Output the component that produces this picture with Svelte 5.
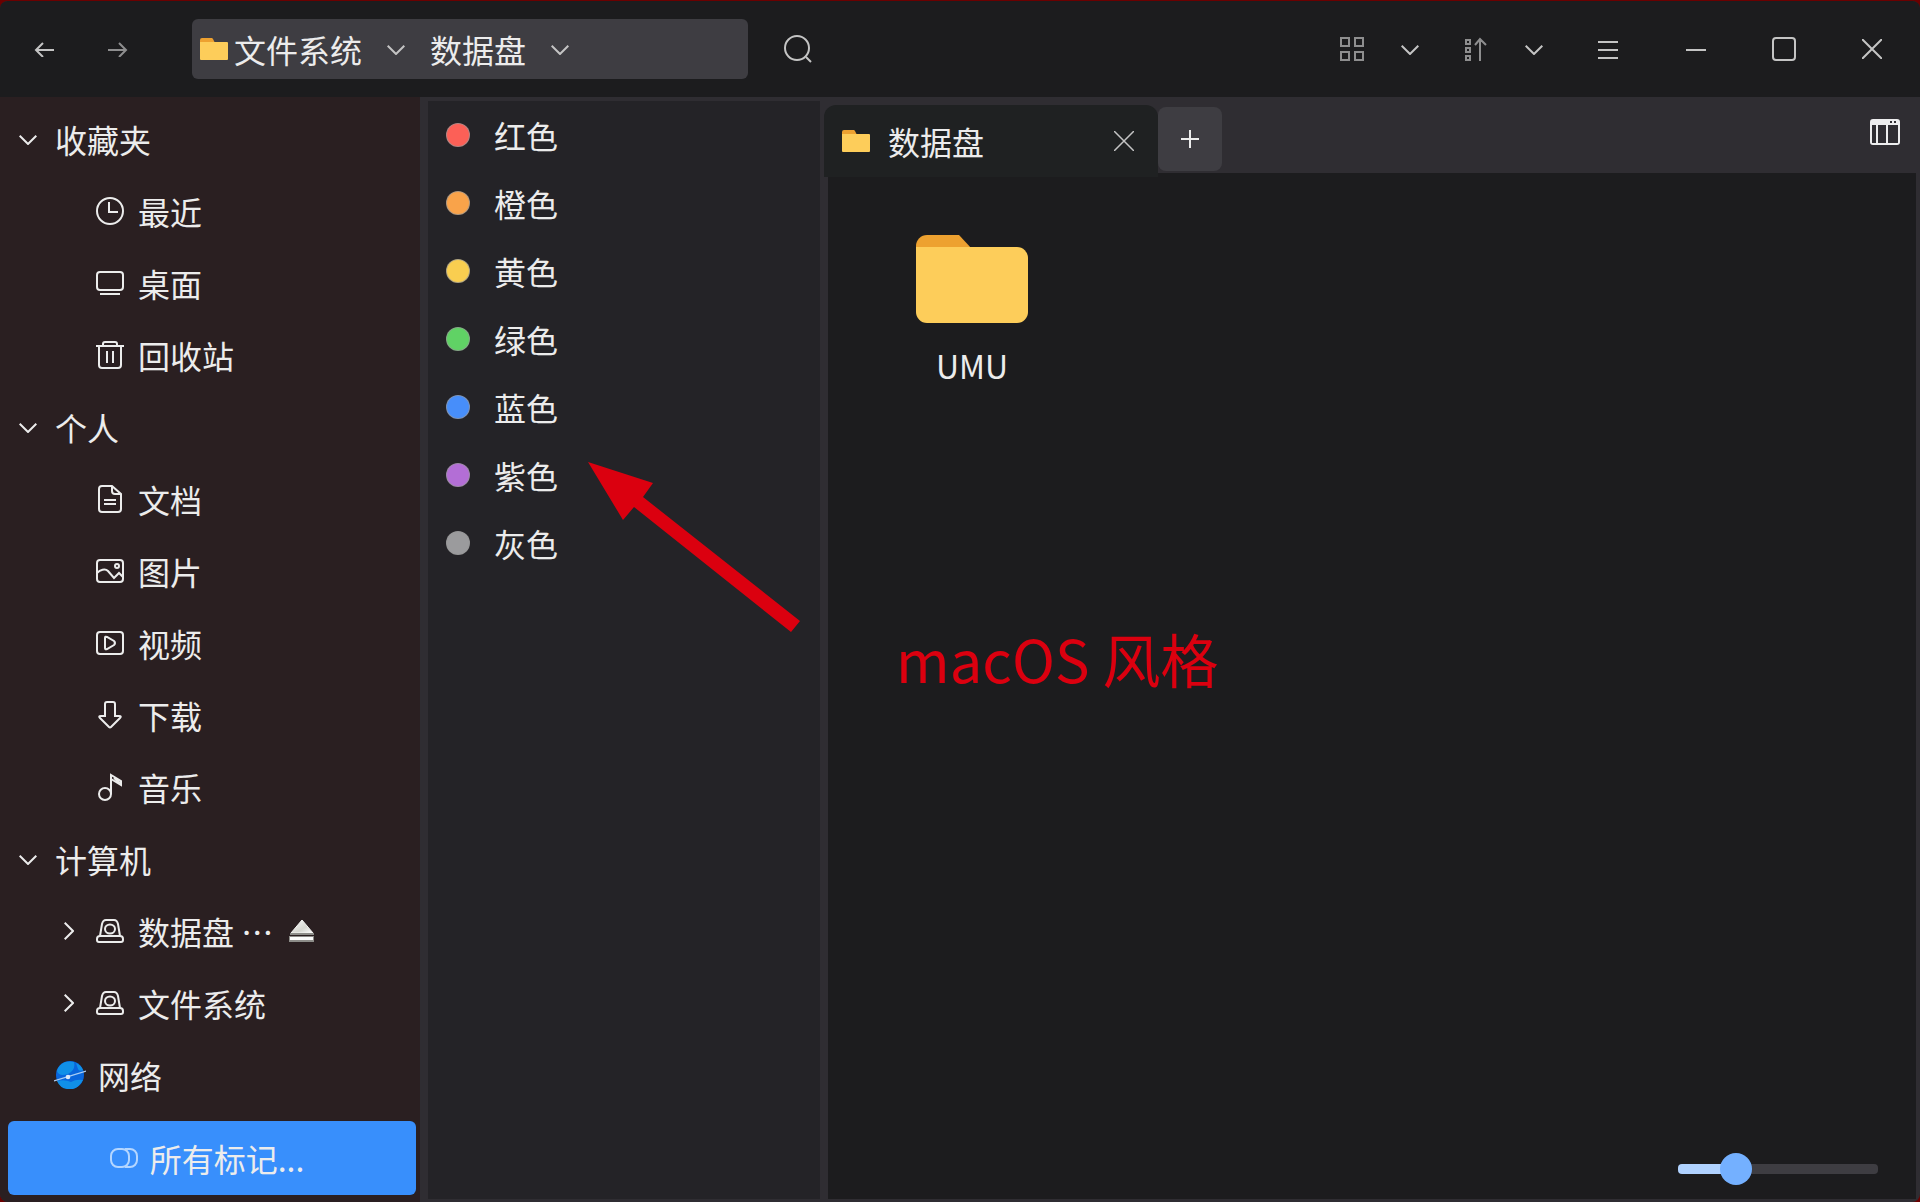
<script>
  let zoom = $state(25);

  const favorites = [
    { icon: 'recent', label: '最近' },
    { icon: 'desktop', label: '桌面' },
    { icon: 'trash', label: '回收站' }
  ];
  const personal = [
    { icon: 'document', label: '文档' },
    { icon: 'picture', label: '图片' },
    { icon: 'video', label: '视频' },
    { icon: 'download', label: '下载' },
    { icon: 'music', label: '音乐' }
  ];
  const drives = [
    { label: '数据盘 …', ejectable: true },
    { label: '文件系统', ejectable: false }
  ];
  const groups = [
    { label: '收藏夹', items: favorites },
    { label: '个人', items: personal }
  ];
  const tags = [
    { label: '红色', tone: 'red' },
    { label: '橙色', tone: 'orange' },
    { label: '黄色', tone: 'yellow' },
    { label: '绿色', tone: 'green' },
    { label: '蓝色', tone: 'blue' },
    { label: '紫色', tone: 'purple' },
    { label: '灰色', tone: 'gray' }
  ];
</script>

{#snippet chevron()}
  <svg class="line" width="18" height="12" viewBox="0 0 18 12" aria-hidden="true"><path d="M.7 2.7 9 11l8.3-8.3" /></svg>
{/snippet}

{#snippet smallFolder()}
  <svg width="28" height="22" viewBox="0 0 28 22" aria-hidden="true">
    <path fill="#eda130" d="M0 5V2a2 2 0 0 1 2-2h9a2 2 0 0 1 2 1l2 4z" />
    <path fill="#fdcd5a" d="M0 4h27a1 1 0 0 1 1 1v16a1 1 0 0 1-1 1H1a1 1 0 0 1-1-1z" />
  </svg>
{/snippet}

{#snippet placeIcon(name)}
  <svg class="line" width="28" height="28" viewBox="0 0 28 28" aria-hidden="true">
    {#if name === 'recent'}
      <circle cx="14" cy="14" r="13" /><path d="M13 5v10h9" />
    {:else if name === 'desktop'}
      <rect x="1" y="3" width="26" height="18" rx="3" /><path d="M4 25h20" />
    {:else if name === 'trash'}
      <path d="M0 5h28M7 5V3a2 2 0 0 1 2-2h10a2 2 0 0 1 2 2v2M3 5v19a3 3 0 0 0 3 3h16a3 3 0 0 0 3-3V5M11 10v12M17 10v12" />
    {:else if name === 'document'}
      <path d="M16 1H6a3 3 0 0 0-3 3v20a3 3 0 0 0 3 3h16a3 3 0 0 0 3-3V9zM16 1v5a3 3 0 0 0 3 3h6M8 15h12M8 19h12" />
    {:else if name === 'picture'}
      <rect x="1" y="3" width="26" height="22" rx="3" /><circle cx="21" cy="9" r="2" />
      <path d="M1 16c3-3 8-5 11-2l6 7 5-5 4 4" />
    {:else if name === 'video'}
      <rect x="1" y="3" width="26" height="22" rx="3" />
      <path d="M9 9v10q0 2 2 1l7-4q2-2 0-4l-7-4q-2-1-2 1z" />
    {:else if name === 'download'}
      <path d="M9 15V3a2 2 0 0 1 2-2h6a2 2 0 0 1 2 2v12h4q3 0 1 2L15 26q-1 1-2 0L4 17q-2-2 1-2z" />
    {:else if name === 'music'}
      <circle cx="9" cy="21" r="6" /><path d="M15 21V2l10 6v4L15 6M18 5l6 5" />
    {:else}
      <path d="M4 19 6 7q1-4 4-4h8q3 0 4 4l2 12M4 19h20q3 0 3 3v1q0 2-2 2H3q-2 0-2-2v-1q0-3 3-3z" />
      <ellipse cx="14" cy="12" rx="5" ry="4.5" />
    {/if}
  </svg>
{/snippet}

{#snippet groupHead(label)}
  <button class="row head" type="button" aria-expanded="true">{@render chevron()}<span>{label}</span></button>
{/snippet}

<div class="window" lang="zh-CN">
  <header class="titlebar">
    <nav class="history" aria-label="历史">
      <button class="icon" type="button" aria-label="后退">
        <svg class="line" width="20" height="16" viewBox="0 0 20 16"><path d="M20 9H2M9 2 2 9l7 7" /></svg>
      </button>
      <button class="icon dim" type="button" aria-label="前进">
        <svg class="line" width="20" height="16" viewBox="0 0 20 16"><path d="M0 9h18M11 2l7 7-7 7" /></svg>
      </button>
    </nav>
    <nav class="address" aria-label="路径">
      <button class="crumb" type="button">{@render smallFolder()}文件系统</button>
      <button class="crumb-more" type="button" aria-label="展开文件系统">{@render chevron()}</button>
      <button class="crumb" type="button">数据盘</button>
      <button class="crumb-more" type="button" aria-label="展开数据盘">{@render chevron()}</button>
    </nav>
    <button class="icon search" type="button" aria-label="搜索">
      <svg class="line" width="28" height="28" viewBox="0 0 28 28"><circle cx="13" cy="13" r="12" /><path d="m22 22 5 5" /></svg>
    </button>
    <div class="tools">
      <div class="pair">
        <button class="icon dim" type="button" aria-label="视图">
          <svg class="line" width="24" height="24" viewBox="0 0 24 24"><path d="M1 1h8v8H1zM15 1h8v8h-8zM1 15h8v8H1zM15 15h8v8h-8z" /></svg>
        </button>
        <button class="icon" type="button" aria-label="视图选项">{@render chevron()}</button>
      </div>
      <div class="pair">
        <button class="icon dim" type="button" aria-label="排序">
          <svg class="line" width="22" height="24" viewBox="0 0 22 24"><path d="M1 3h4v4H1zM1 11h4v4H1zM1 19h4v4H1zM15 24V2M10 8l5-6 6 6" /></svg>
        </button>
        <button class="icon" type="button" aria-label="排序选项">{@render chevron()}</button>
      </div>
    </div>
    <div class="controls">
      <button class="icon" type="button" aria-label="菜单">
        <svg class="line" width="20" height="20" viewBox="0 0 20 20"><path d="M0 3h20M0 11h20M0 19h20" /></svg>
      </button>
      <button class="icon" type="button" aria-label="最小化">
        <svg class="line" width="20" height="20" viewBox="0 0 20 20"><path d="M0 11h20" /></svg>
      </button>
      <button class="icon" type="button" aria-label="最大化">
        <svg class="line" width="24" height="24" viewBox="0 0 24 24"><rect x="1" y="1" width="22" height="22" rx="3" /></svg>
      </button>
      <button class="icon" type="button" aria-label="关闭">
        <svg class="line" width="20" height="20" viewBox="0 0 20 20"><path d="m0 0 20 20M20 0 0 20" /></svg>
      </button>
    </div>
  </header>

  <div class="body">
    <aside class="sidebar">
      {#each groups as group}
        {@render groupHead(group.label)}
        {#each group.items as item}
          <button class="row item" type="button">{@render placeIcon(item.icon)}<span>{item.label}</span></button>
        {/each}
      {/each}
      {@render groupHead('计算机')}
      {#each drives as drive}
        <div class="row drive">
          <button class="twisty" type="button" aria-label="展开">
            <svg class="line" width="10" height="18" viewBox="0 0 10 18"><path d="M.7.7 9 9 .7 17.3" /></svg>
          </button>
          <button class="place" type="button">{@render placeIcon('drive')}<span>{drive.label}</span></button>
          {#if drive.ejectable}
            <button class="eject" type="button" aria-label="弹出">
              <svg width="26" height="24" viewBox="0 0 26 24">
                <defs><linearGradient id="metal" x1="0" y1="0" x2="1" y2="1"><stop offset="0" stop-color="#fff" /><stop offset=".6" stop-color="#d5d6d0" /><stop offset="1" stop-color="#fff" /></linearGradient></defs>
                <path fill="url(#metal)" stroke="#f2f2f0" d="M13 1 24 14H2z" />
                <path fill="#8c8c88" d="M1 14h24v2H1zM0 17h25v6H0z" />
                <path fill="#fafafa" d="M1 18h23v3H1z" />
              </svg>
            </button>
          {/if}
        </div>
      {/each}
      <button class="row network" type="button">
        <svg width="32" height="28" viewBox="0 0 32 28" aria-hidden="true">
          <circle cx="16" cy="14" r="14" fill="#0965dc" />
          <path fill="#1090e8" d="M3 10C5 2 13-1 20 1q2 8-6 12Q5 16 3 10zM22 2q5 2 7 7-4 2-5-1t-2-6zM3 20q8-2 14 1 5-3 12-2-6 11-16 9Q6 27 3 20z" />
          <path stroke="#a9cdf4" stroke-width="1.3" d="m0 20 32-10" />
          <circle cx="14" cy="16" r="2.3" fill="#dceafa" />
        </svg>
        <span>网络</span>
      </button>
      <button class="all-tags" type="button">
        <svg width="28" height="20" viewBox="0 0 28 20" aria-hidden="true">
          <rect x="1" y="1" width="18" height="18" rx="7" /><path d="M15 1h5a7 7 0 0 1 7 7v4a7 7 0 0 1-7 7h-5" />
        </svg>
        <span>所有标记...</span>
      </button>
    </aside>

    <section class="tags" aria-label="标记">
      {#each tags as tag}
        <button class="tag" type="button"><i class="dot {tag.tone}"></i><span>{tag.label}</span></button>
      {/each}
    </section>

    <main class="pane">
      <div class="tabbar">
        <div class="tab">
          <button class="tab-title" type="button">{@render smallFolder()}<span>数据盘</span></button>
          <button class="icon" type="button" aria-label="关闭标签页">
            <svg class="line thin" width="20" height="20" viewBox="0 0 20 20"><path d="m0 0 20 20M20 0 0 20" /></svg>
          </button>
        </div>
        <button class="new-tab" type="button" aria-label="新建标签页">
          <svg class="line" width="18" height="18" viewBox="0 0 18 18"><path d="M9 0v18M0 9h18" /></svg>
        </button>
        <button class="preview" type="button" aria-label="预览窗格">
          <svg width="30" height="26" viewBox="0 0 30 26">
            <path fill="#ededee" fill-rule="evenodd" d="M3 0h24a3 3 0 0 1 3 3v20a3 3 0 0 1-3 3H3a3 3 0 0 1-3-3V3a3 3 0 0 1 3-3zM2 6v18h4V6zM8 6v18h8V6zM18 6v18h10V6zM20 2v2h2V2zM24 2v2h2V2z" />
          </svg>
        </button>
      </div>
      <div class="files">
        <button class="file" type="button">
          <svg width="112" height="88" viewBox="0 0 112 88" aria-hidden="true">
            <path fill="#eda130" d="M0 14V11A11 11 0 0 1 11 0h32l13 14z" />
            <path fill="#fdcd5a" d="M0 12h101a11 11 0 0 1 11 11v54a11 11 0 0 1-11 11H11A11 11 0 0 1 0 77z" />
          </svg>
          <span>UMU</span>
        </button>
        <input class="zoom" type="range" min="0" max="100" aria-label="图标大小" bind:value={zoom} style="--fill: {zoom}%" />
      </div>
    </main>
  </div>

  <svg class="arrow" width="212" height="170" viewBox="0 0 212 170" aria-hidden="true">
    <path fill="#db000f" d="M0 0 65 21 55 35 212 159 203 170 46 45 35 58z" />
  </svg>
  <p class="note">macOS 风格</p>
</div>

<style>
  :global(body) {
    background: #6b0000;
  }
  .window,
  .window * {
    box-sizing: border-box;
  }
  .window {
    position: relative;
    display: flex;
    flex-direction: column;
    min-height: 100vh;
    border-top: 1px solid #6b0000;
    border-radius: 8px;
    overflow: hidden;
    background: #2f2d32;
    color: #ececec;
    font: 32px/48px 'Noto Sans CJK SC', sans-serif;
  }
  button {
    display: flex;
    align-items: center;
    margin: 0;
    padding: 0;
    border: 0;
    background: none;
    color: inherit;
    font: inherit;
    white-space: nowrap;
  }
  svg {
    display: block;
    flex: none;
  }
  .line {
    fill: none;
    stroke: currentColor;
    stroke-width: 2;
  }
  .thin {
    stroke-width: 1.5;
  }

  .titlebar {
    display: flex;
    align-items: center;
    height: 96px;
    padding: 0 28px 0 24px;
    background: #1c1c1e;
  }
  .icon {
    justify-content: center;
    width: 40px;
    height: 40px;
    color: #c4c4c4;
  }
  .icon.dim {
    color: #8e8e8f;
  }
  .history {
    display: flex;
    gap: 34px;
  }
  .address {
    display: flex;
    align-items: center;
    width: 556px;
    height: 60px;
    margin: 0 30px 0 54px;
    padding-left: 8px;
    border-radius: 6px;
    background: #3e3d42;
  }
  .crumb {
    gap: 6px;
  }
  .crumb-more {
    justify-content: center;
    width: 68px;
    height: 48px;
    color: #c4c4c4;
  }
  .tools {
    display: flex;
    gap: 26px;
    margin-left: auto;
  }
  .pair {
    display: flex;
    gap: 18px;
  }
  .controls {
    display: flex;
    gap: 48px;
    margin-left: 34px;
  }

  .body {
    display: flex;
    flex: 1;
  }
  .sidebar {
    display: flex;
    flex-direction: column;
    width: 420px;
    padding: 6px 0 7px;
    background: #2a1f21;
  }
  .row {
    height: 72px;
  }
  .head {
    gap: 18px;
    padding-left: 19px;
  }
  .item {
    gap: 14px;
    padding-left: 96px;
  }
  .drive {
    display: flex;
    align-items: center;
    padding-left: 64px;
  }
  .twisty {
    width: 32px;
  }
  .place {
    gap: 14px;
  }
  .eject {
    margin-left: 16px;
  }
  .network {
    gap: 12px;
    padding-left: 54px;
  }
  .all-tags {
    gap: 12px;
    justify-content: center;
    height: 74px;
    margin: 10px 4px 0 8px;
    padding-right: 10px;
    border-radius: 6px;
    background: #388ffc;
  }
  .all-tags svg {
    fill: none;
    stroke: #b4d6ff;
    stroke-width: 2;
  }

  .tags {
    width: 392px;
    margin: 4px 0 3px 8px;
    background: #242327;
  }
  .tag {
    gap: 24px;
    width: 100%;
    height: 68px;
    padding-left: 18px;
  }
  .dot {
    width: 24px;
    height: 24px;
    border: 1px solid rgba(150, 150, 150, 0.7);
    border-radius: 50%;
  }
  .red { background: #fc6057; }
  .orange { background: #f9a34a; }
  .yellow { background: #f9ce50; }
  .green { background: #60d265; }
  .blue { background: #478efa; }
  .purple { background: #b36ed6; }
  .gray { background: #9b9b9d; }

  .pane {
    display: flex;
    flex: 1;
    flex-direction: column;
    min-width: 0;
    padding: 0 4px 3px 8px;
  }
  .tabbar {
    display: flex;
    align-items: flex-start;
    height: 76px;
    margin-left: -4px;
    padding-top: 8px;
  }
  .tab {
    z-index: 1;
    display: flex;
    align-items: center;
    justify-content: space-between;
    width: 334px;
    height: 72px;
    padding: 0 14px 0 18px;
    border-radius: 12px 12px 0 0;
    background: #1f2122;
  }
  .tab-title {
    gap: 18px;
  }
  .new-tab {
    justify-content: center;
    width: 64px;
    height: 64px;
    margin-top: 2px;
    border-radius: 8px;
    background: #3e3d42;
  }
  .preview {
    margin: 14px 16px 0 auto;
  }
  .files {
    display: flex;
    flex: 1;
    flex-direction: column;
    align-items: flex-start;
    justify-content: space-between;
    padding: 62px 38px 14px 64px;
    background: #1c1c1e;
  }
  .file {
    flex-direction: column;
    gap: 18px;
    width: 160px;
  }
  .zoom {
    align-self: flex-end;
    width: 200px;
    height: 32px;
    margin: 0;
    background: none;
    appearance: none;
  }
  .zoom::-webkit-slider-runnable-track {
    height: 10px;
    border-radius: 4px;
    background: linear-gradient(90deg, #b0d2ff var(--fill), #3e3d42 var(--fill));
  }
  .zoom::-webkit-slider-thumb {
    width: 32px;
    height: 32px;
    margin-top: -11px;
    border-radius: 50%;
    background: #74b0ff;
    appearance: none;
  }

  .arrow {
    position: absolute;
    top: 461px;
    left: 588px;
  }
  .note {
    position: absolute;
    top: 625px;
    left: 896px;
    margin: 0;
    color: #db000f;
    font-size: 58px;
    line-height: 64px;
  }
</style>
